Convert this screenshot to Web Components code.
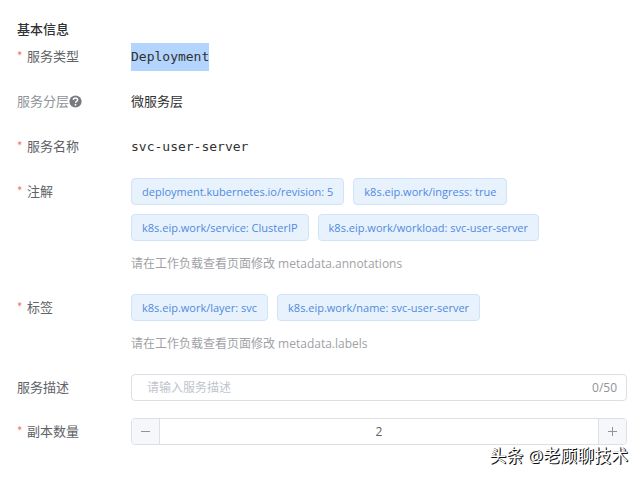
<!DOCTYPE html>
<html lang="zh-CN">
<head>
<meta charset="utf-8">
<meta name="viewport" content="width=device-width, initial-scale=1">
<title>基本信息</title>
<style>
body {
    margin: 0;
    background: #fff;
    color: #606266;
    font: 13px/28px "Open Sans", "Noto Sans CJK SC", sans-serif;
    --line: #dcdfe6;
    --muted: #909399;
    --text: #303133;
}
</style>
</head>
<body>
<workload-form></workload-form>
<author-mark></author-mark>

<script>
// label column + content column, shared by every kind of row
const rowStyle = `
:host { display: block; }
.row {
    display: grid;
    grid-template-columns: 114px minmax(0, 1fr);
    align-items: start;
}
.label { display: flex; align-items: center; height: 26px; line-height: 26px; }
:host([required]) .label::before {
    content: "*";
    color: #f56c6c;
    width: 10px;
    font-family: Lato, sans-serif;
}
`;

function make(html) {
    const temp = document.createElement('template');
    temp.innerHTML = html;
    return temp;
}

class BaseElement extends HTMLElement {
    constructor() {
        super();
        this.attachShadow({mode: 'open'});
        this.shadowRoot.appendChild(this.constructor.temp.content.cloneNode(true));
    }
    $(selector) {
        return this.shadowRoot.querySelector(selector);
    }
}

class FormRow extends BaseElement {
    static temp = make(`
<style>${rowStyle}
:host([muted]) .label { color: var(--muted); }
.content { min-height: 28px; color: var(--text); line-height: 26px; }
</style>
<div class="row">
    <div class="label"><span></span><slot name="icon"></slot></div>
    <div class="content"><slot></slot></div>
</div>`);
    connectedCallback() {
        this.$('.label span').textContent = this.getAttribute('label');
    }
}

class HelpIcon extends BaseElement {
    static temp = make(`
<style>
:host { display: flex; color: #77797d; }
svg { display: block; }
</style>
<svg width="13" height="13" viewBox="0 0 16 16" role="img" aria-label="帮助">
    <circle cx="8" cy="8" r="7.5" fill="currentColor"/>
    <path d="M5.4 6.2C5.4 4.6 6.5 3.7 8 3.7S10.6 4.6 10.6 6C10.6 7.8 8 7.9 8 9.6" fill="none" stroke="#fff" stroke-width="1.8"/>
    <circle cx="8" cy="12" r="1.1" fill="#fff"/>
</svg>`);
}

class TagItem extends BaseElement {
    static temp = make(`
<style>
:host {
    display: block;
    box-sizing: border-box;
    height: 27px;
    padding: 0 10px;
    border: 1px solid #d0e3f9;
    border-radius: 4px;
    background: #e8f2fd;
    color: #4f8ade;
    font-size: 11px;
    line-height: 25px;
    white-space: nowrap;
}
</style>
<slot></slot>`);
}

class TagList extends BaseElement {
    static temp = make(`
<style>
.tags { display: flex; flex-wrap: wrap; gap: 9px; }
.hint {
    height: 27px;
    margin: 9px 0 0;
    color: #a0a2a6;
    font-size: 12px;
    line-height: 28px;
}
:host { display: block; }
</style>
<div class="tags"><slot></slot></div>
<p class="hint"></p>`);
    connectedCallback() {
        this.$('.hint').textContent = this.getAttribute('hint');
    }
}

class TextField extends BaseElement {
    static temp = make(`
<style>${rowStyle}
.box {
    display: flex;
    box-sizing: border-box;
    height: 27px;
    padding: 0 9px 0 15px;
    border: 1px solid var(--line);
    border-radius: 4px;
}
.box:focus-within { border-color: #409eff; }
input {
    flex: 1;
    min-width: 0;
    padding: 0;
    border: 0;
    outline: 0;
    background: none;
    color: inherit;
    font: inherit;
    font-size: 12px;
}
input::placeholder { color: #c0c4cc; }
.count { color: var(--muted); font-size: 12px; line-height: 25px; }
</style>
<div class="row">
    <label class="label" for="field"></label>
    <div class="box"><input id="field" type="text"><span class="count"></span></div>
</div>`);
    connectedCallback() {
        const max = this.getAttribute('max');
        const input = this.$('input');
        const update = () => {
            this.$('.count').textContent = input.value.length + '/' + max;
        };
        this.$('label').textContent = this.getAttribute('label');
        input.placeholder = this.getAttribute('placeholder');
        input.maxLength = max;
        input.addEventListener('input', update);
        update();
    }
}

class NumberField extends BaseElement {
    static temp = make(`
<style>${rowStyle}
.box {
    display: flex;
    box-sizing: border-box;
    height: 27px;
    border: 1px solid var(--line);
    border-radius: 4px;
    overflow: hidden;
}
button {
    display: flex;
    align-items: center;
    justify-content: center;
    width: 28px;
    padding: 0;
    border: 0;
    background: #f5f7fa;
    color: #909399;
    cursor: pointer;
}
.minus { border-right: 1px solid var(--line); }
.plus { border-left: 1px solid var(--line); }
input {
    flex: 1;
    min-width: 0;
    padding: 0;
    border: 0;
    outline: 0;
    color: #606266;
    font: inherit;
    font-size: 12px;
    text-align: center;
}
</style>
<div class="row">
    <label class="label" for="field"></label>
    <div class="box">
        <button class="minus" type="button" aria-label="减少"><svg width="9" height="9" viewBox="0 0 9 9"><path d="M0 4.5H9" stroke="currentColor"/></svg></button>
        <input id="field" type="text" inputmode="numeric">
        <button class="plus" type="button" aria-label="增加"><svg width="9" height="9" viewBox="0 0 9 9"><path d="M0 4.5H9M4.5 0V9" stroke="currentColor"/></svg></button>
    </div>
</div>`);
    connectedCallback() {
        const input = this.$('input');
        this.$('label').textContent = this.getAttribute('label');
        input.value = this.getAttribute('value');
        this.$('.minus').onclick = () => { input.value = Math.max(0, Number(input.value) - 1); };
        this.$('.plus').onclick = () => { input.value = Number(input.value) + 1; };
    }
}

class WorkloadForm extends BaseElement {
    static temp = make(`
<style>
:host { display: block; padding: 15px 13px 33px 17px; }
h1 {
    height: 28px;
    margin: 0;
    color: var(--text);
    font-size: 13px;
    font-weight: 500;
    line-height: 28px;
}
form { display: grid; gap: 17px; }
code, mark {
    display: block;
    width: fit-content;
    font-family: "DejaVu Sans Mono", monospace;
    font-size: 13px;
    line-height: 28px;
}
mark {
    background: #b3d4fc;
    color: inherit;
}
</style>
<h1>基本信息</h1>
<form>
    <form-row label="服务类型" required><mark>Deployment</mark></form-row>
    <form-row label="服务分层" muted><help-icon slot="icon"></help-icon>微服务层</form-row>
    <form-row label="服务名称" required><code>svc-user-server</code></form-row>
    <form-row label="注解" required>
        <tag-list hint="请在工作负载查看页面修改 metadata.annotations">
            <tag-item>deployment.kubernetes.io/revision: 5</tag-item>
            <tag-item>k8s.eip.work/ingress: true</tag-item>
            <tag-item>k8s.eip.work/service: ClusterIP</tag-item>
            <tag-item>k8s.eip.work/workload: svc-user-server</tag-item>
        </tag-list>
    </form-row>
    <form-row label="标签" required>
        <tag-list hint="请在工作负载查看页面修改 metadata.labels">
            <tag-item>k8s.eip.work/layer: svc</tag-item>
            <tag-item>k8s.eip.work/name: svc-user-server</tag-item>
        </tag-list>
    </form-row>
    <text-field label="服务描述" placeholder="请输入服务描述" max="50"></text-field>
    <number-field label="副本数量" value="2" required></number-field>
</form>`);
}

class AuthorMark extends BaseElement {
    static temp = make(`
<style>
:host {
    position: absolute;
    right: 12px;
    top: 443px;
    color: #fff;
    font-size: 17px;
    line-height: 26px;
    text-shadow: 1px 1px 0 #111, 1px 0 0 #333;
    pointer-events: none;
}
</style>
<span>头条 @老顾聊技术</span>`);
}

customElements.define('help-icon', HelpIcon);
customElements.define('tag-item', TagItem);
customElements.define('tag-list', TagList);
customElements.define('form-row', FormRow);
customElements.define('text-field', TextField);
customElements.define('number-field', NumberField);
customElements.define('workload-form', WorkloadForm);
customElements.define('author-mark', AuthorMark);
</script>
</body>
</html>
